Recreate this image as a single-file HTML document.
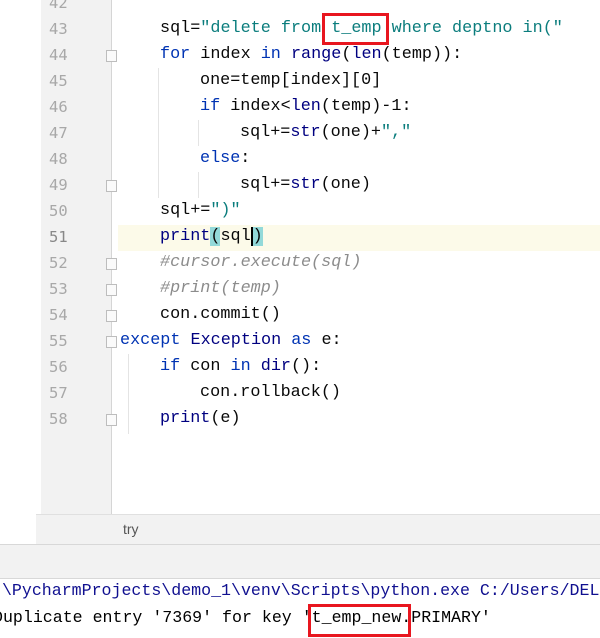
<!DOCTYPE html>
<html><head><meta charset="utf-8"><style>
*{margin:0;padding:0;box-sizing:border-box}
body{width:600px;height:638px;overflow:hidden;background:#fff;position:relative;font-family:"Liberation Mono",monospace;font-size:16.8px}
.gut{position:absolute;left:41px;top:0;width:71px;height:514px;background:#f2f2f2;border-right:1px solid #d5d5d5}
.ln{position:absolute;left:49px;color:#a8a8a8;font-size:15.5px;font-family:"DejaVu Sans Mono","Liberation Mono",monospace;line-height:26px}
.c{position:absolute;line-height:26px;white-space:pre;color:#080808}
.k{color:#0033b3}.s{color:#0b7d7d}.b{color:#000080}.cm{color:#8c8c8c;font-style:italic}
.cur{position:absolute;left:118px;top:225px;width:482px;height:26px;background:#fcfae9}
.box{position:absolute;border:3px solid #e8161f}
.fold{position:absolute;left:106px;width:11px;height:12px;border:1px solid #bdbdbd;background:#fafafa}
.guide{position:absolute;width:1px;background:#e4e4e4}
.con{position:absolute;line-height:26px;white-space:pre;font-size:16.6px}
</style></head><body>
<div class="gut"></div>
<div class="cur"></div>
<div class="ln" style="top:-10px">42</div>
<div class="ln" style="top:16px">43</div>
<div class="ln" style="top:42px">44</div>
<div class="ln" style="top:68px">45</div>
<div class="ln" style="top:94px">46</div>
<div class="ln" style="top:120px">47</div>
<div class="ln" style="top:146px">48</div>
<div class="ln" style="top:172px">49</div>
<div class="ln" style="top:198px">50</div>
<div class="ln" style="top:224px;color:#888">51</div>
<div class="ln" style="top:250px">52</div>
<div class="ln" style="top:276px">53</div>
<div class="ln" style="top:302px">54</div>
<div class="ln" style="top:328px">55</div>
<div class="ln" style="top:354px">56</div>
<div class="ln" style="top:380px">57</div>
<div class="ln" style="top:406px">58</div>
<div class="fold" style="top:50px"></div>
<div class="fold" style="top:180px"></div>
<div class="fold" style="top:258px"></div>
<div class="fold" style="top:284px"></div>
<div class="fold" style="top:310px"></div>
<div class="fold" style="top:336px"></div>
<div class="fold" style="top:414px"></div>
<div class="guide" style="left:158px;top:68px;height:130px"></div>
<div class="guide" style="left:198px;top:120px;height:26px"></div>
<div class="guide" style="left:198px;top:172px;height:26px"></div>
<div class="guide" style="left:128px;top:354px;height:80px"></div>
<div class="c" style="left:160px;top:16px">sql=<span class="s">"delete from t_emp where deptno in("</span></div>
<div class="c" style="left:160px;top:42px"><span class="k">for</span> index <span class="k">in</span> <span class="b">range</span>(<span class="b">len</span>(temp)):</div>
<div class="c" style="left:200px;top:68px">one=temp[index][0]</div>
<div class="c" style="left:200px;top:94px"><span class="k">if</span> index&lt;<span class="b">len</span>(temp)-1:</div>
<div class="c" style="left:240px;top:120px">sql+=<span class="b">str</span>(one)+<span class="s">","</span></div>
<div class="c" style="left:200px;top:146px"><span class="k">else</span>:</div>
<div class="c" style="left:240px;top:172px">sql+=<span class="b">str</span>(one)</div>
<div class="c" style="left:160px;top:198px">sql+=<span class="s">")"</span></div>
<div class="c" style="left:160px;top:224px"><span class="b">print</span><span style="background:#93d9d9">(</span>sql<span style="background:#93d9d9;border-left:2px solid #000">)</span></div>
<div class="c cm" style="left:160px;top:250px">#cursor.execute(sql)</div>
<div class="c cm" style="left:160px;top:276px">#print(temp)</div>
<div class="c" style="left:160px;top:302px">con.commit()</div>
<div class="c" style="left:120px;top:328px"><span class="k">except</span> <span class="b">Exception</span> <span class="k">as</span> e:</div>
<div class="c" style="left:160px;top:354px"><span class="k">if</span> con <span class="k">in</span> <span class="b">dir</span>():</div>
<div class="c" style="left:200px;top:380px">con.rollback()</div>
<div class="c" style="left:160px;top:406px"><span class="b">print</span>(e)</div>
<div class="box" style="left:322px;top:13px;width:67px;height:32px"></div>
<div style="position:absolute;left:36px;top:514px;width:564px;height:30px;background:#f2f2f2;border-top:1px solid #e0e0e0"></div>
<div style="position:absolute;left:123px;top:521px;font-family:'Liberation Sans',sans-serif;font-size:14px;color:#555">try</div>
<div style="position:absolute;left:0;top:544px;width:600px;height:35px;background:#f2f2f2;border-top:1px solid #d8d8d8;border-bottom:1px solid #d8d8d8"></div>
<div class="con" style="left:-8px;top:578px;color:#101090">:\PycharmProjects\demo_1\venv\Scripts\python.exe C:/Users/DELL</div>
<div class="con" style="left:-7px;top:605px">Duplicate entry '7369' for key 't_emp_new.PRIMARY'</div>
<div class="box" style="left:308px;top:604px;width:103px;height:33px"></div>
</body></html>
